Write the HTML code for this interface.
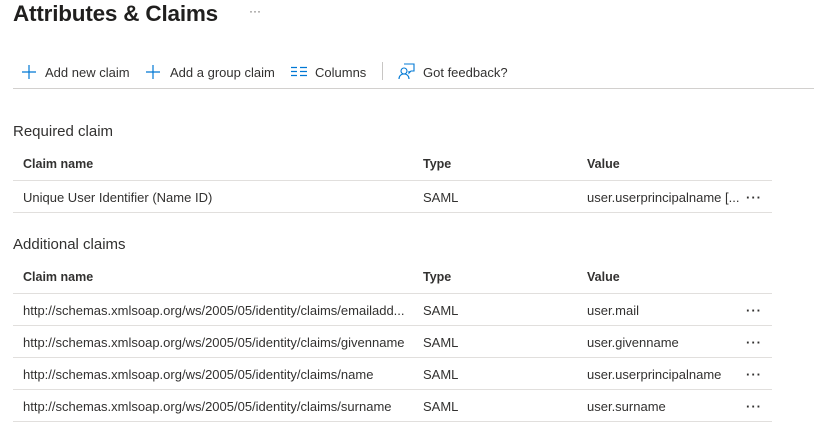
<!DOCTYPE html>
<html><head><meta charset="utf-8"><style>
body{margin:0;width:814px;height:428px;background:#fff;font-family:"Liberation Sans",sans-serif;color:#323130;position:relative;overflow:hidden}
.a{position:absolute;white-space:nowrap}
h1{position:absolute;left:13px;top:1px;margin:0;font-size:22.5px;font-weight:bold;color:#201f1e;letter-spacing:-0.2px}
.t{font-size:13px}
.b{font-size:12.5px;font-weight:bold}
.line{position:absolute;left:13px;width:759px;height:1px;background:#e1dfdd}
.dots{position:absolute;font-size:13px;font-weight:bold;letter-spacing:1px;color:#323130}
</style></head><body>
<h1>Attributes &amp; Claims</h1>
<div class="a" style="left:249px;top:4px;font-size:12px;color:#605e5c">···</div>

<svg class="a" style="left:21px;top:64px" width="16" height="16"><path d="M8 1v14M1 8h14" stroke="#0078d4" stroke-width="1.2" fill="none"/></svg>
<div class="a t" style="left:45px;top:65px">Add new claim</div>
<svg class="a" style="left:145px;top:64px" width="16" height="16"><path d="M8 1v14M1 8h14" stroke="#0078d4" stroke-width="1.2" fill="none"/></svg>
<div class="a t" style="left:170px;top:65px">Add a group claim</div>
<svg class="a" style="left:290px;top:66px" width="18" height="12"><path d="M1 1.5h6M1 5.5h6M1 9.5h6M10 1.5h7M10 5.5h7M10 9.5h7" stroke="#0078d4" stroke-width="1.2"/></svg>
<div class="a t" style="left:315px;top:65px">Columns</div>
<div class="a" style="left:382px;top:62px;width:1px;height:18px;background:#c8c6c4"></div>
<svg class="a" style="left:398px;top:62px" width="18" height="18"><circle cx="6" cy="9" r="3" stroke="#0078d4" fill="none" stroke-width="1.1"/><path d="M1 17c0-3 2-5 5-5s5 2 5 5M6 2h10v7h-3l-2 2v-2" stroke="#0078d4" fill="none" stroke-width="1.1"/></svg>
<div class="a t" style="left:423px;top:65px">Got feedback?</div>
<div class="a" style="left:13px;top:88px;width:801px;height:1px;background:#d2d0ce"></div>

<div class="a" style="left:13px;top:123px;font-size:15px">Required claim</div>
<div class="a b" style="left:23px;top:157px">Claim name</div>
<div class="a b" style="left:423px;top:157px">Type</div>
<div class="a b" style="left:587px;top:157px">Value</div>
<div class="line" style="top:180px"></div>
<div class="a t" style="left:23px;top:190px">Unique User Identifier (Name ID)</div>
<div class="a t" style="left:423px;top:190px">SAML</div>
<div class="a t" style="left:587px;top:190px">user.userprincipalname [...</div>
<div class="dots" style="left:746px;top:190px">···</div>
<div class="line" style="top:212px"></div>

<div class="a" style="left:13px;top:236px;font-size:15px">Additional claims</div>
<div class="a b" style="left:23px;top:270px">Claim name</div>
<div class="a b" style="left:423px;top:270px">Type</div>
<div class="a b" style="left:587px;top:270px">Value</div>
<div class="line" style="top:293px"></div>
<div class="a t" style="left:23px;top:303px">http://schemas.xmlsoap.org/ws/2005/05/identity/claims/emailadd...</div>
<div class="a t" style="left:423px;top:303px">SAML</div>
<div class="a t" style="left:587px;top:303px">user.mail</div>
<div class="dots" style="left:746px;top:303px">···</div>
<div class="line" style="top:325px"></div>
<div class="a t" style="left:23px;top:335px">http://schemas.xmlsoap.org/ws/2005/05/identity/claims/givenname</div>
<div class="a t" style="left:423px;top:335px">SAML</div>
<div class="a t" style="left:587px;top:335px">user.givenname</div>
<div class="dots" style="left:746px;top:335px">···</div>
<div class="line" style="top:357px"></div>
<div class="a t" style="left:23px;top:367px">http://schemas.xmlsoap.org/ws/2005/05/identity/claims/name</div>
<div class="a t" style="left:423px;top:367px">SAML</div>
<div class="a t" style="left:587px;top:367px">user.userprincipalname</div>
<div class="dots" style="left:746px;top:367px">···</div>
<div class="line" style="top:389px"></div>
<div class="a t" style="left:23px;top:399px">http://schemas.xmlsoap.org/ws/2005/05/identity/claims/surname</div>
<div class="a t" style="left:423px;top:399px">SAML</div>
<div class="a t" style="left:587px;top:399px">user.surname</div>
<div class="dots" style="left:746px;top:399px">···</div>
<div class="line" style="top:421px"></div>
</body></html>
